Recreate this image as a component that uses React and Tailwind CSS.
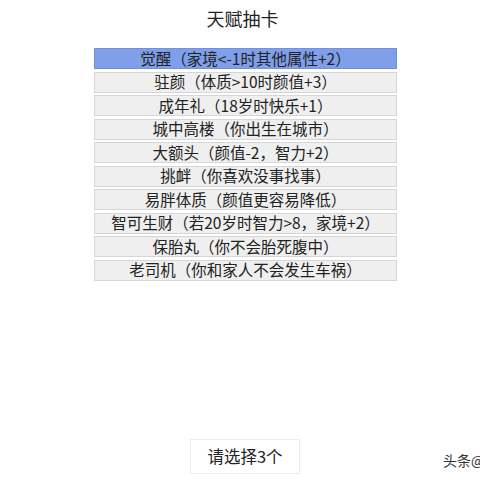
import React from "react";

const talents = [
  "觉醒（家境<-1时其他属性+2）",
  "驻颜（体质>10时颜值+3）",
  "成年礼（18岁时快乐+1）",
  "城中高楼（你出生在城市）",
  "大额头（颜值-2，智力+2）",
  "挑衅（你喜欢没事找事）",
  "易胖体质（颜值更容易降低）",
  "智可生财（若20岁时智力>8，家境+2）",
  "保胎丸（你不会胎死腹中）",
  "老司机（你和家人不会发生车祸）",
];

export default function App() {
  return (
    <div className="relative w-[480px] h-[480px] bg-white overflow-hidden text-[#222] font-['Noto_Sans_CJK_SC','Noto_Sans',sans-serif]">
      {/* Title */}
      <h1 className="pt-[5px] pl-[5px] text-center text-[18px] leading-[26px]">天赋抽卡</h1>

      {/* Talent list */}
      <ul className="mt-[17px] ml-[94px] w-[303px] flex flex-col gap-[2.5px]">
        {talents.map((t, i) => (
          <li
            key={t}
            className={
              "h-[21px] flex items-center justify-center border text-[15.5px] leading-none " +
              (i === 0
                ? "bg-[#7f9fea] border-[#7590d8]"
                : "bg-[#efefef] border-[#d6d6d6]")
            }
          >
            {t}
          </li>
        ))}
      </ul>

      {/* Bottom button */}
      <div className="absolute left-[190px] top-[439px]">
        <button className="w-[110px] h-[35px] bg-white border border-[#ececec] text-[16.5px] text-[#222] font-['Noto_Sans_CJK_SC',sans-serif]">
          请选择3个
        </button>
      </div>

      {/* Watermark */}
      <div className="absolute left-[443px] top-[450px] text-[14px] text-[#333] whitespace-nowrap">
        头条@
      </div>
    </div>
  );
}
